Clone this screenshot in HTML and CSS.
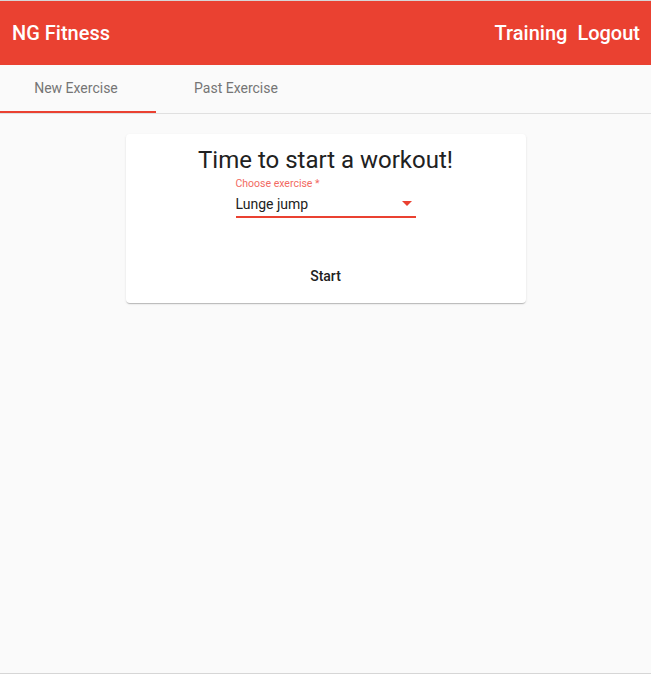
FILE: index.html
```html
<!DOCTYPE html>
<html>
<head>
<meta charset="utf-8">
<link rel="stylesheet" href="styles.css">
</head>
<body>
<div class="frame">
  <header class="toolbar">
    <span class="brand">NG Fitness</span>
    <nav class="nav">
      <a class="nav-link">Training</a>
      <a class="nav-link">Logout</a>
    </nav>
  </header>
  <div class="tabs">
    <div class="tab tab-active">New Exercise</div>
    <div class="tab">Past Exercise</div>
  </div>
  <main class="content">
    <section class="card">
      <h1 class="title">Time to start a workout!</h1>
      <div class="field">
        <label class="field-label">Choose exercise *</label>
        <div class="select">
          <span class="select-value">Lunge jump</span>
          <span class="arrow"></span>
        </div>
      </div>
      <button class="start">Start</button>
    </section>
  </main>
</div>
</body>
</html>
```
FILE: styles.css
```css
html, body {
  margin: 0;
  padding: 0;
  height: 100%;
}
body {
  font-family: Roboto, "Helvetica Neue", sans-serif;
  background: #fafafa;
}
.frame {
  box-sizing: border-box;
  height: 674px;
  border-top: 1px solid #d6d6d6;
  border-bottom: 1px solid #d6d6d6;
  background: #fafafa;
}
.toolbar {
  height: 64px;
  background: #ea4131;
  color: #fff;
  display: flex;
  align-items: center;
  justify-content: space-between;
  padding: 0 11px 0 12px;
  font-size: 20px;
  font-weight: 500;
}
.nav {
  display: flex;
  gap: 10px;
}
.tabs {
  display: flex;
  height: 48px;
  border-bottom: 1px solid #e0e0e0;
}
.tab {
  width: 156px;
  display: flex;
  align-items: center;
  justify-content: center;
  font-size: 14px;
  color: #757575;
  box-sizing: border-box;
  border-bottom: 2px solid transparent;
}
.tab + .tab {
  width: 160px;
}
.tab-active {
  border-bottom-color: #ea4131;
  padding-right: 4px;
}
.content {
  display: flex;
  justify-content: center;
  padding-top: 20px;
}
.card {
  width: 400px;
  box-sizing: border-box;
  background: #fff;
  border-radius: 4px;
  box-shadow: 0 2px 1px -1px rgba(0,0,0,.14), 0 1px 1px 0 rgba(0,0,0,.1), 0 1px 3px 0 rgba(0,0,0,.08);
  display: flex;
  flex-direction: column;
  align-items: center;
  padding: 12px 16px 9px;
}
.title {
  margin: 0;
  font-size: 24px;
  font-weight: 400;
  color: #212121;
  line-height: 28px;
}
.field {
  width: 180px;
  margin-top: 4px;
}
.field-label {
  display: block;
  font-size: 10.5px;
  color: #f26a62;
  line-height: 12px;
}
.select {
  display: flex;
  align-items: center;
  justify-content: space-between;
  height: 25px;
  border-bottom: 2px solid #ea4131;
  margin-top: 1px;
}
.select-value {
  font-size: 14px;
  color: #212121;
}
.arrow {
  width: 0;
  height: 0;
  border-left: 5px solid transparent;
  border-right: 5px solid transparent;
  border-top: 5px solid #ea4131;
  margin-right: 4px;
}
.start {
  margin-top: 40px;
  font-family: inherit;
  font-size: 14px;
  font-weight: 500;
  color: #212121;
  background: transparent;
  border: 0;
  padding: 0 16px;
  height: 36px;
  line-height: 36px;
}
```
